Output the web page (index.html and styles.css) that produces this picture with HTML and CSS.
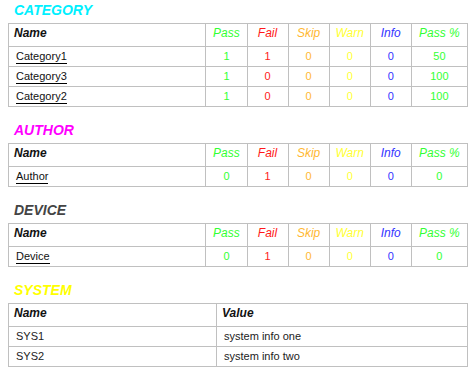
FILE: index.html
```html
<!DOCTYPE html>
<html>
<head>
<meta charset="utf-8">
<link rel="stylesheet" href="styles.css">
</head>
<body>
<section class="block">
  <h4 class="title t-category">CATEGORY</h4>
  <table class="stats">
    <thead>
      <tr>
        <th class="c-name">Name</th>
        <th class="c-num pass">Pass</th>
        <th class="c-num fail">Fail</th>
        <th class="c-num skip">Skip</th>
        <th class="c-num warn">Warn</th>
        <th class="c-num info">Info</th>
        <th class="c-pct pass">Pass %</th>
      </tr>
    </thead>
    <tbody>
      <tr><td><a class="link">Category1</a></td><td class="pass">1</td><td class="fail">1</td><td class="skip">0</td><td class="warn">0</td><td class="info">0</td><td class="pass">50</td></tr>
      <tr><td><a class="link">Category3</a></td><td class="pass">1</td><td class="fail">0</td><td class="skip">0</td><td class="warn">0</td><td class="info">0</td><td class="pass">100</td></tr>
      <tr><td><a class="link">Category2</a></td><td class="pass">1</td><td class="fail">0</td><td class="skip">0</td><td class="warn">0</td><td class="info">0</td><td class="pass">100</td></tr>
    </tbody>
  </table>
</section>

<section class="block">
  <h4 class="title t-author">AUTHOR</h4>
  <table class="stats">
    <thead>
      <tr>
        <th class="c-name">Name</th>
        <th class="c-num pass">Pass</th>
        <th class="c-num fail">Fail</th>
        <th class="c-num skip">Skip</th>
        <th class="c-num warn">Warn</th>
        <th class="c-num info">Info</th>
        <th class="c-pct pass">Pass %</th>
      </tr>
    </thead>
    <tbody>
      <tr><td><a class="link">Author</a></td><td class="pass">0</td><td class="fail">1</td><td class="skip">0</td><td class="warn">0</td><td class="info">0</td><td class="pass">0</td></tr>
    </tbody>
  </table>
</section>

<section class="block">
  <h4 class="title t-device">DEVICE</h4>
  <table class="stats">
    <thead>
      <tr>
        <th class="c-name">Name</th>
        <th class="c-num pass">Pass</th>
        <th class="c-num fail">Fail</th>
        <th class="c-num skip">Skip</th>
        <th class="c-num warn">Warn</th>
        <th class="c-num info">Info</th>
        <th class="c-pct pass">Pass %</th>
      </tr>
    </thead>
    <tbody>
      <tr><td><a class="link">Device</a></td><td class="pass">0</td><td class="fail">1</td><td class="skip">0</td><td class="warn">0</td><td class="info">0</td><td class="pass">0</td></tr>
    </tbody>
  </table>
</section>

<section class="block">
  <h4 class="title t-system">SYSTEM</h4>
  <table class="stats sys">
    <thead>
      <tr>
        <th class="c-sysname">Name</th>
        <th>Value</th>
      </tr>
    </thead>
    <tbody>
      <tr><td>SYS1</td><td>system info one</td></tr>
      <tr><td>SYS2</td><td>system info two</td></tr>
    </tbody>
  </table>
</section>
</body>
</html>
```

FILE: styles.css
```css
html, body {
  background: #ffffff;
}
body {
  margin: 2px 8px 0;
  font-family: "Liberation Sans", Arial, sans-serif;
  color: #222;
}
.block {
  margin: 0 0 15px;
}
.title {
  margin: 0 0 5px 6px;
  font-size: 14px;
  line-height: 16px;
  font-weight: bold;
  font-style: italic;
}
.t-category { color: #00f0ff; }
.t-author { color: #ff00ff; }
.t-device { color: #444444; }
.t-system { color: #ffff00; }

.stats {
  width: 100%;
  border-collapse: collapse;
  table-layout: fixed;
}
.stats th,
.stats td {
  border: 1px solid #c0c0c0;
  box-sizing: border-box;
}
.stats th {
  padding: 2px 5px 6px;
  font-size: 12px;
  line-height: 14px;
  font-style: italic;
  font-weight: normal;
  text-align: center;
}
.stats th.c-name,
.sys th {
  font-weight: bold;
  text-align: left;
  color: #111;
}
.stats td {
  padding: 3px 7px 3px 7px;
  font-size: 11px;
  line-height: 13px;
  text-align: center;
}
.stats td:first-child,
.sys td {
  text-align: left;
}
.c-name { width: 197px; }
.c-num { width: 41px; }
.c-pct { width: 56px; }
.c-sysname { width: 208px; }

.link {
  color: #111;
  text-decoration: none;
  border-bottom: 1px solid #000;
  padding-bottom: 1px;
}

.pass { color: #33ff33; }
.fail { color: #ff1a1a; }
.skip { color: #ffb833; }
.warn { color: #ffff33; }
.info { color: #3333ff; }
```
